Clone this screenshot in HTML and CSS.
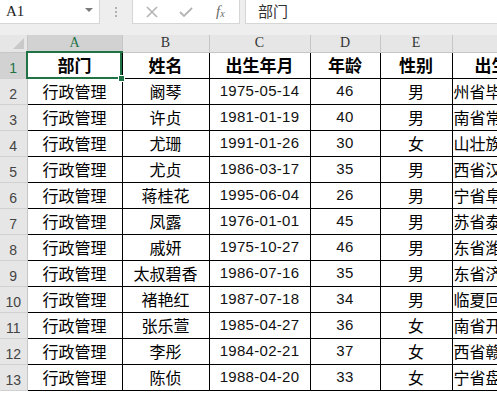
FILE: index.html
```html
<!DOCTYPE html>
<html lang="zh-CN">
  <head>
    <meta charset="UTF-8" />
    <title>Sheet1</title>
    <link rel="stylesheet" href="styles.css">
  </head>
  <body>
    <div class="formula-bar">
      <div class="name-box">
        <span>A1</span>
        <span class="caret"></span>
      </div>
      <div class="grip"><i></i><i></i><i></i></div>
      <div class="buttons">
        <svg class="btn" width="14" height="14" viewBox="0 0 14 14">
          <path d="M2 2 L12 12 M12 2 L2 12" stroke="#b4b4b4" stroke-width="1.6" fill="none" />
        </svg>
        <svg class="btn" width="16" height="14" viewBox="0 0 16 14">
          <path d="M2 7 L6 11 L14 3" stroke="#b4b4b4" stroke-width="1.8" fill="none" />
        </svg>
        <span class="fx">f<sub>x</sub></span>
      </div>
      <div class="formula">部门</div>
    </div>

    <div class="sheet">
      <table class="grid">
        <colgroup>
          <col class="c-head" />
          <col class="c-a" />
          <col class="c-b" />
          <col class="c-c" />
          <col class="c-d" />
          <col class="c-e" />
          <col class="c-f" />
        </colgroup>
        <thead>
          <tr>
            <th class="corner"></th>
            <th class="active">A</th>
            <th>B</th>
            <th>C</th>
            <th>D</th>
            <th>E</th>
            <th></th>
          </tr>
        </thead>
        <tbody>
          <tr class="title">
            <th class="active">1</th>
            <td>部门</td><td>姓名</td><td>出生年月</td><td>年龄</td><td>性别</td><td class="f">出生地</td>
          </tr>
          <tr><th>2</th><td>行政管理</td><td>阚琴</td><td class="num">1975-05-14</td><td class="num">46</td><td>男</td><td class="f">州省毕</td></tr>
          <tr><th>3</th><td>行政管理</td><td>许贞</td><td class="num">1981-01-19</td><td class="num">40</td><td>男</td><td class="f">南省常</td></tr>
          <tr><th>4</th><td>行政管理</td><td>尤珊</td><td class="num">1991-01-26</td><td class="num">30</td><td>女</td><td class="f">山壮族</td></tr>
          <tr><th>5</th><td>行政管理</td><td>尤贞</td><td class="num">1986-03-17</td><td class="num">35</td><td>男</td><td class="f">西省汉</td></tr>
          <tr><th>6</th><td>行政管理</td><td>蒋桂花</td><td class="num">1995-06-04</td><td class="num">26</td><td>男</td><td class="f">宁省阜</td></tr>
          <tr><th>7</th><td>行政管理</td><td>凤露</td><td class="num">1976-01-01</td><td class="num">45</td><td>男</td><td class="f">苏省泰</td></tr>
          <tr><th>8</th><td>行政管理</td><td>戚妍</td><td class="num">1975-10-27</td><td class="num">46</td><td>男</td><td class="f">东省潍</td></tr>
          <tr><th>9</th><td>行政管理</td><td>太叔碧香</td><td class="num">1986-07-16</td><td class="num">35</td><td>男</td><td class="f">东省济</td></tr>
          <tr><th>10</th><td>行政管理</td><td>褚艳红</td><td class="num">1987-07-18</td><td class="num">34</td><td>男</td><td class="f">临夏回</td></tr>
          <tr><th>11</th><td>行政管理</td><td>张乐萱</td><td class="num">1985-04-27</td><td class="num">36</td><td>女</td><td class="f">南省开</td></tr>
          <tr><th>12</th><td>行政管理</td><td>李彤</td><td class="num">1984-02-21</td><td class="num">37</td><td>女</td><td class="f">西省赣</td></tr>
          <tr><th>13</th><td>行政管理</td><td>陈侦</td><td class="num">1988-04-20</td><td class="num">33</td><td>女</td><td class="f">宁省盘</td></tr>
        </tbody>
      </table>
      <div class="selection"><span class="handle"></span></div>
    </div>
  </body>
</html>
```

FILE: styles.css
```css
html,
body {
  margin: 0;
  padding: 0;
}

body {
  width: 497px;
  height: 393px;
  overflow: hidden;
  background-color: #fff;
  font-family: "Noto Sans CJK SC", sans-serif;
  color: #000;
}

/* formula bar */
.formula-bar {
  display: flex;
  height: 25px;
  padding-bottom: 10px;
  background-color: #eeeeee;
}

.name-box {
  width: 100px;
  height: 24px;
  background-color: #fff;
  border-bottom: 1px solid #d6d6d6;
  border-right: 1px solid #d6d6d6;
  box-sizing: border-box;
  display: flex;
  align-items: center;
  justify-content: space-between;
  padding: 0 6px 0 6px;
  font-family: "Liberation Serif", serif;
  font-size: 15px;
  color: #222;
}

.caret {
  width: 0;
  height: 0;
  border-left: 4px solid transparent;
  border-right: 4px solid transparent;
  border-top: 4px solid #7a7a7a;
  margin-top: -4px;
}

.grip {
  width: 32px;
  display: flex;
  flex-direction: column;
  align-items: center;
  justify-content: center;
  gap: 2px;
  height: 24px;
}

.grip i {
  width: 2px;
  height: 2px;
  background-color: #b0b0b0;
}

.buttons {
  width: 108px;
  height: 24px;
  background-color: #fff;
  border-bottom: 1px solid #d6d6d6;
  border-left: 1px solid #d6d6d6;
  border-right: 1px solid #d6d6d6;
  box-sizing: border-box;
  display: flex;
  align-items: center;
  padding-left: 12px;
  gap: 19px;
}

.fx {
  font-family: "Liberation Serif", serif;
  font-style: italic;
  font-size: 15px;
  color: #6a6a6a;
  margin-left: 3px;
}

.fx sub {
  font-size: 10px;
  vertical-align: -1px;
}

.formula {
  flex: 1;
  height: 24px;
  margin-left: 5px;
  background-color: #fff;
  border-bottom: 1px solid #d6d6d6;
  border-left: 1px solid #d6d6d6;
  box-sizing: border-box;
  padding-left: 12px;
  font-size: 15px;
  line-height: 22px;
  color: #333;
}

/* sheet */
.sheet {
  position: relative;
}

.grid {
  border-collapse: collapse;
  table-layout: fixed;
  width: 520px;
}

.c-head { width: 27px; }
.c-a { width: 95px; }
.c-b { width: 87px; }
.c-c { width: 101px; }
.c-d { width: 70px; }
.c-e { width: 72px; }
.c-f { width: 68px; }

.grid thead th {
  height: 16px;
  padding: 0;
  background-color: #e6e6e6;
  border-right: 1px solid #c6c6c6;
  border-bottom: 1px solid #c6c6c6;
  font-family: "Liberation Serif", serif;
  font-weight: normal;
  font-size: 14px;
  line-height: 16px;
  color: #333;
}

.grid thead th.active {
  background-color: #d2d2d2;
  color: #217346;
  border-bottom: 2px solid #217346;
}

.grid thead th.corner {
  position: relative;
  background-color: #e6e6e6;
}

.corner::after {
  content: "";
  position: absolute;
  right: 3px;
  bottom: 3px;
  width: 0;
  height: 0;
  border-left: 11px solid transparent;
  border-bottom: 11px solid #c9c9c9;
}

.grid tbody th {
  height: 24px;
  padding: 0 0 1px;
  background-color: #e6e6e6;
  border-bottom: 1px solid #d0d0d0;
  border-right: 1px solid #c6c6c6;
  font-family: "Liberation Sans", sans-serif;
  font-weight: normal;
  font-size: 14px;
  color: #444;
  vertical-align: bottom;
  line-height: 18px;
}

.grid tbody th.active {
  background-color: #d2d2d2;
  color: #217346;
}

.grid td {
  height: 24px;
  padding: 0;
  border: 1px solid #000;
  text-align: center;
  font-size: 16px;
  line-height: 24px;
  white-space: nowrap;
  overflow: hidden;
}

.grid td.num {
  font-family: "Liberation Sans", sans-serif;
  font-size: 15px;
  letter-spacing: 0.3px;
  color: #111;
}

.grid td.f {
  text-align: left;
  padding-left: 1px;
}

.title td {
  font-weight: 700;
  font-size: 17px;
}

.title td.f {
  padding-left: 22px;
}

.selection {
  position: absolute;
  left: 26px;
  top: 16px;
  width: 92px;
  height: 24px;
  border: 2px solid #217346;
}

.handle {
  position: absolute;
  right: -5px;
  bottom: -5px;
  width: 5px;
  height: 5px;
  background-color: #217346;
  border: 1px solid #fff;
}
```
